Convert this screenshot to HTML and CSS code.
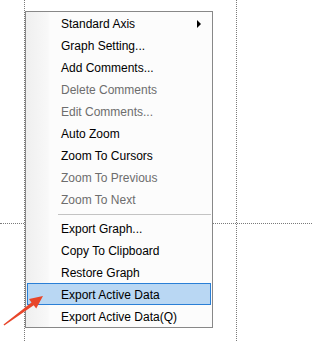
FILE: index.html
```html
<!DOCTYPE html>
<html lang="en">
  <head>
    <meta charset="UTF-8" />
    <title>Graph Menu</title>
    <link rel="stylesheet" href="styles.css">
  </head>
  <body>
    <div class="canvas">
      <div class="cursorV cursorLeft"></div>
      <div class="cursorV cursorRight"></div>
      <div class="cursorH"></div>

      <ul class="menu">
        <li class="item"><span>Standard Axis</span><span class="subArrow"></span></li>
        <li class="item">Graph Setting...</li>
        <li class="item">Add Comments...</li>
        <li class="item disabled">Delete Comments</li>
        <li class="item disabled">Edit Comments...</li>
        <li class="item">Auto Zoom</li>
        <li class="item">Zoom To Cursors</li>
        <li class="item disabled">Zoom To Previous</li>
        <li class="item disabled">Zoom To Next</li>
        <li class="separator"></li>
        <li class="item">Export Graph...</li>
        <li class="item">Copy To Clipboard</li>
        <li class="item">Restore Graph</li>
        <li class="item active">Export Active Data</li>
        <li class="item">Export Active Data(Q)</li>
      </ul>

      <!-- red pointer arrow drawn over the menu -->
      <svg class="pointer" width="312" height="341" viewBox="0 0 312 341">
        <polygon fill="#e8462a" points="43,296 36.2,308.6 33.7,305.2 4.3,325.6 3.5,324.4 31.5,302.4 29,299" />
      </svg>
    </div>
  </body>
</html>
```

FILE: styles.css
```css
html, body {
  margin: 0;
  padding: 0;
  background: #ffffff;
}

.canvas {
  position: relative;
  width: 312px;
  height: 341px;
  overflow: hidden;
  padding: 11px 0 0 25px;
  box-sizing: border-box;
  font-family: "Liberation Sans", Arial, sans-serif;
  font-size: 12px;
}

/* graph cursor lines */
.cursorV {
  position: absolute;
  top: 0;
  width: 0;
  height: 341px;
  border-left: 1px dotted #7a7a7a;
}

.cursorLeft {
  left: 24px;
}

.cursorRight {
  left: 236px;
}

.cursorH {
  position: absolute;
  left: 0;
  top: 223px;
  width: 312px;
  height: 0;
  border-top: 1px dotted #7a7a7a;
}

/* context menu */
.menu {
  position: relative;
  list-style: none;
  margin: 0;
  padding: 0;
  width: 186px;
  border: 1px solid #888888;
  background: linear-gradient(90deg, #efefef 0px, #f8f8f8 22px, #fcfcfc 24px, #fcfcfc 100%);
}

.item {
  display: flex;
  align-items: center;
  box-sizing: border-box;
  height: 22px;
  padding-top: 1px;
  padding-left: 35px;
  padding-right: 11px;
  color: #000000;
  white-space: nowrap;
}

.item span:first-child {
  flex: 1;
}

.disabled {
  color: #6d6d6d;
}

.active {
  margin: 0 1px;
  padding-left: 33px;
  border: 1px solid #2a7fd6;
  background: #b9d7f3;
}

.subArrow {
  width: 0;
  height: 0;
  border-top: 4px solid transparent;
  border-bottom: 4px solid transparent;
  border-left: 4px solid #000000;
}

.separator {
  height: 7px;
  margin-left: 32px;
  margin-right: 1px;
  background: linear-gradient(#c3c3c3, #c3c3c3) 0 4px / 100% 1px no-repeat;
}

.pointer {
  position: absolute;
  left: 0;
  top: 0;
  pointer-events: none;
}
```
